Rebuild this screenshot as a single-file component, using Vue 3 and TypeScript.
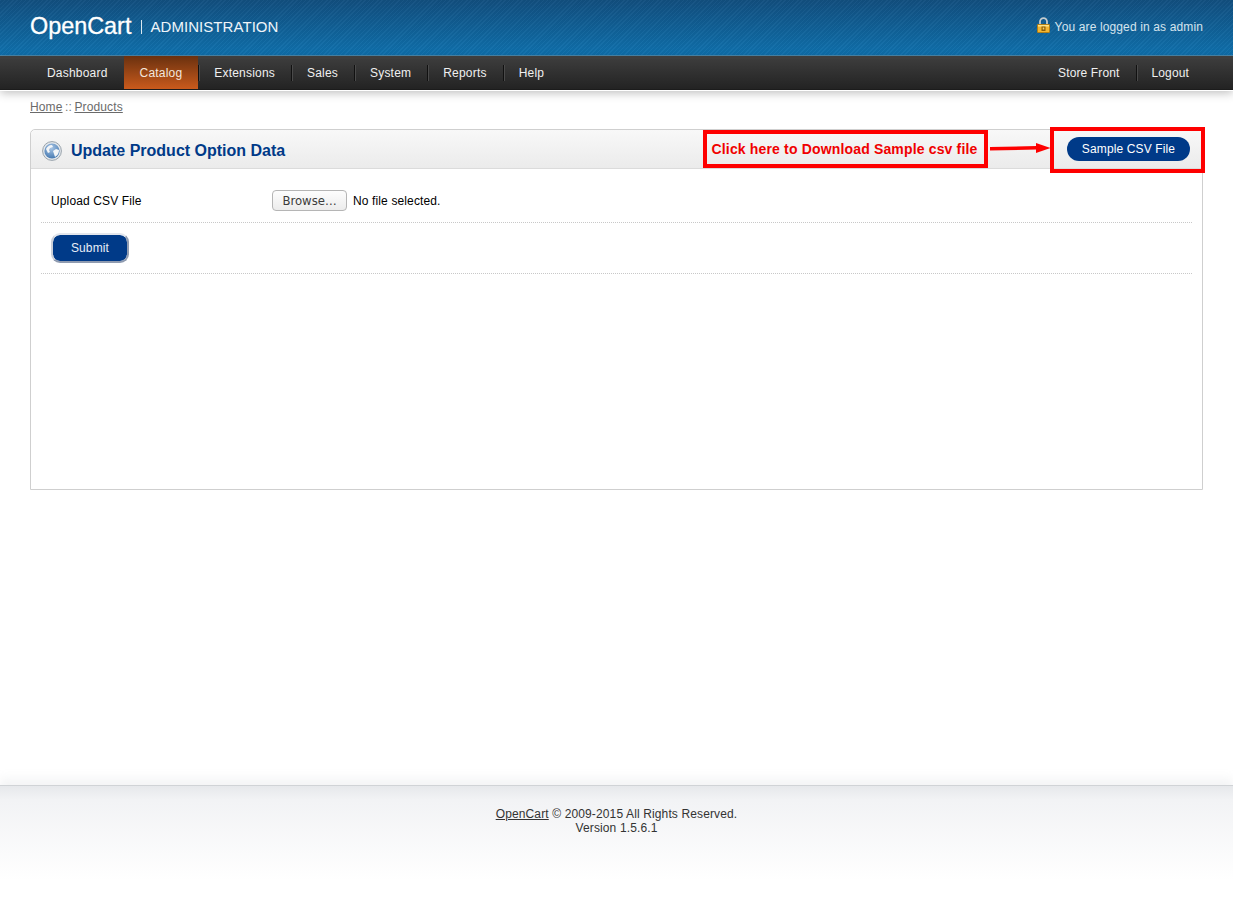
<script setup lang="ts">
const leftMenu = ['Dashboard', 'Catalog', 'Extensions', 'Sales', 'System', 'Reports', 'Help'];
const rightMenu = ['Store Front', 'Logout'];
</script>

<template>
  <div class="page">
    <header class="header">
      <div class="brand">
        <span class="logo">OpenCart</span>
        <span class="brand-sep"></span>
        <span class="admin">ADMINISTRATION</span>
      </div>
      <div class="logged">
        <svg class="lock" width="13" height="16" viewBox="0 0 13 16">
          <path d="M3 8V4.6a3.5 3.5 0 0 1 7 0V8" fill="none" stroke="#c3cbce" stroke-width="1.8" />
          <rect x="0.5" y="7.5" width="12" height="8" rx="0.5" fill="#f2b632" stroke="#b47f14" />
          <rect x="1" y="8" width="11" height="1.5" fill="#fde48a" />
          <rect x="4.5" y="9.5" width="4" height="4.5" fill="#8a5d0a" />
          <rect x="5.7" y="10.5" width="1.6" height="2" fill="#f8d264" />
        </svg>
        <span>You are logged in as admin</span>
      </div>
    </header>

    <nav class="menu">
      <ul class="menu-list left">
        <li v-for="item in leftMenu" :key="item" :class="{ active: item === 'Catalog' }">{{ item }}</li>
      </ul>
      <ul class="menu-list right">
        <li v-for="item in rightMenu" :key="item">{{ item }}</li>
      </ul>
    </nav>

    <main class="content">
      <div class="breadcrumb"><a>Home</a> :: <a>Products</a></div>

      <section class="box">
        <div class="heading">
          <h1>
            <svg class="globe" width="20" height="20" viewBox="0 0 20 20">
              <defs>
                <radialGradient id="sphere" cx="45%" cy="30%" r="75%">
                  <stop offset="0" stop-color="#a9c6e6" />
                  <stop offset="1" stop-color="#3f74ad" />
                </radialGradient>
              </defs>
              <circle cx="10" cy="10" r="9.4" fill="#e4e8ec" stroke="#98a2ab" stroke-width="1" />
              <circle cx="10" cy="10" r="7.6" fill="url(#sphere)" />
              <path d="M4 8c1-2 3-4 6-4l1 2-3 1-1 2 1 2-2 1zM11 10l3-2 3 1c0 3-1 5-4 7l-1-3z" fill="#f4f6f8" />
            </svg>
            Update Product Option Data
          </h1>
          <a class="sample-btn">Sample CSV File</a>
        </div>

        <div class="form">
          <div class="row upload">
            <label>Upload CSV File</label>
            <div class="file">
              <button class="browse" type="button">Browse…</button>
              <span>No file selected.</span>
            </div>
          </div>
          <div class="row submit-row">
            <button class="submit" type="button">Submit</button>
          </div>
        </div>

        <!-- red annotation drawn over the screenshot -->
        <div class="note">Click here to Download Sample csv file</div>
        <svg class="note-arrow" width="62" height="14" viewBox="0 0 62 14">
          <path d="M0 7.8 47 6.8" stroke="#fe0000" stroke-width="3.6" fill="none" />
          <path d="M46 2 60.5 7 46 12z" fill="#fe0000" />
        </svg>
        <div class="note-frame"></div>
      </section>
    </main>

    <footer class="footer">
      <div><a>OpenCart</a> © 2009-2015 All Rights Reserved.</div>
      <div>Version 1.5.6.1</div>
    </footer>
  </div>
</template>

<style>
html,
body {
  margin: 0;
  background: #fff;
}
</style>

<style scoped>
.page {
  height: 897px;
  display: flex;
  flex-direction: column;
  font-family: 'Liberation Sans', Arial, sans-serif;
  font-size: 12px;
  letter-spacing: 0.13px;
  color: #000;
  overflow: hidden;
}

.header {
  height: 56px;
  box-sizing: border-box;
  padding: 0 30px 2px;
  display: flex;
  align-items: center;
  justify-content: space-between;
  border-bottom: 1px solid #4a87ab;
  background:
    repeating-linear-gradient(135deg, rgba(255, 255, 255, 0.03) 0 1px, rgba(0, 0, 0, 0.03) 1px 3px),
    linear-gradient(#124f7f, #0f71ae);
}

.brand {
  display: flex;
  align-items: center;
  color: #fff;
}

.logo {
  font-size: 23.4px;
  letter-spacing: 0;
  -webkit-text-stroke: 0.3px #fff;
}

.brand-sep {
  width: 1px;
  height: 14px;
  margin: 1px 8px 0 10px;
  background: #dbe8f0;
}

.admin {
  font-size: 15px;
  letter-spacing: 0.06px;
  color: #eef5fa;
}

.logged {
  display: flex;
  align-items: center;
  gap: 5px;
  color: #d5e4ee;
}

.lock {
  margin-top: -4px;
}

.menu {
  height: 34px;
  box-sizing: border-box;
  padding: 0 28px 0 31px;
  display: flex;
  justify-content: space-between;
  border-top: 3px solid #3e3e3e;
  border-bottom: 1px solid #1c1c1c;
  background: linear-gradient(#3c3c3c, #232323);
  box-shadow: 0 1px 0 #fff, 0 3px 9px rgba(0, 0, 0, 0.26);
  position: relative;
}

.menu-list {
  display: flex;
  margin: 0;
  padding: 0;
  list-style: none;
}

.menu-list.left {
  letter-spacing: 0.2px;
}

.menu-list li {
  position: relative;
  padding: 0 16px;
  line-height: 28px;
  color: #f0f0f0;
}

.menu-list li + li::before {
  content: '';
  position: absolute;
  left: 0;
  top: 6px;
  width: 1px;
  height: 16px;
  background: #111;
  box-shadow: 1px 0 0 #4a4a4a;
}

.menu-list li.active {
  height: 33px;
  margin-top: -3px;
  line-height: 34px;
  color: #f4e6dc;
  background: linear-gradient(#6a310f, #c95a1c);
}

.menu-list li.active::before {
  display: none;
}

.content {
  flex: 1;
  padding: 0 30px;
}

.breadcrumb {
  margin-top: 10px;
  height: 29px;
  line-height: 14px;
  word-spacing: -1px;
  color: #7a7a7a;
}

.breadcrumb a {
  color: #6a6a6a;
  text-decoration: underline;
}

.box {
  position: relative;
  height: 361px;
  box-sizing: border-box;
  border: 1px solid #cfcfcf;
  border-radius: 5px 5px 0 0;
}

.heading {
  height: 39px;
  box-sizing: border-box;
  padding: 0 12px 0 11px;
  display: flex;
  align-items: center;
  justify-content: space-between;
  border-bottom: 1px solid #dbdbdb;
  border-radius: 5px 5px 0 0;
  background: linear-gradient(#f8f8f8, #ebebeb);
}

h1 {
  margin: 3px 0 0;
  display: flex;
  align-items: center;
  gap: 9px;
  font-size: 16px;
  font-weight: bold;
  letter-spacing: 0;
  color: #003a88;
}

.sample-btn {
  width: 123px;
  height: 24px;
  line-height: 24px;
  text-align: center;
  border-radius: 12px;
  background: #003a88;
  color: #fff;
}

.form {
  padding: 0 10px;
}

.row {
  display: flex;
  align-items: center;
  border-bottom: 1px dotted #c8c8c8;
}

.upload {
  height: 54px;
  box-sizing: border-box;
  padding: 11px 0 0 10px;
}

.upload label {
  width: 221px;
}

.file {
  display: flex;
  align-items: center;
  gap: 6px;
}

.browse {
  width: 75px;
  height: 21px;
  margin-top: -1px;
  padding: 0;
  border: 1px solid #b5b5b5;
  border-radius: 4px;
  background: linear-gradient(#fdfdfd, #ececec);
  color: #3c3c3c;
  font-family: 'DejaVu Sans', sans-serif;
  font-size: 11.7px;
  letter-spacing: 0;
}

.submit-row {
  height: 51px;
  box-sizing: border-box;
  padding-left: 10px;
}

.submit {
  width: 78px;
  height: 30px;
  padding: 0;
  border: 2px solid #8f9bb0;
  border-top-color: #e3e6ec;
  border-left-color: #c9cfd9;
  border-radius: 9px;
  background: #003a88;
  background-clip: padding-box;
  color: #e8eef7;
  font-family: 'Liberation Sans', Arial, sans-serif;
  font-size: 12px;
  letter-spacing: 0.13px;
}

.note {
  position: absolute;
  left: 672px;
  top: 0;
  width: 285px;
  height: 38px;
  box-sizing: border-box;
  border: 4px solid #fe0000;
  padding-right: 2px;
  line-height: 30px;
  text-align: center;
  color: #f00000;
  font-size: 14px;
  font-weight: bold;
  letter-spacing: 0.16px;
}

.note-arrow {
  position: absolute;
  left: 959px;
  top: 11px;
}

.note-frame {
  position: absolute;
  left: 1019px;
  top: -3px;
  width: 155px;
  height: 46px;
  box-sizing: border-box;
  border: 4px solid #fe0000;
}

.footer {
  height: 112px;
  box-sizing: border-box;
  padding-top: 21px;
  text-align: center;
  line-height: 14px;
  color: #333;
  border-top: 1px solid #d0d3d6;
  background: linear-gradient(#e6e8eb, #f2f3f5 14px, #fff 85%);
  box-shadow: 0 -6px 9px rgba(200, 205, 210, 0.22);
}

.footer a {
  text-decoration: underline;
}
</style>
